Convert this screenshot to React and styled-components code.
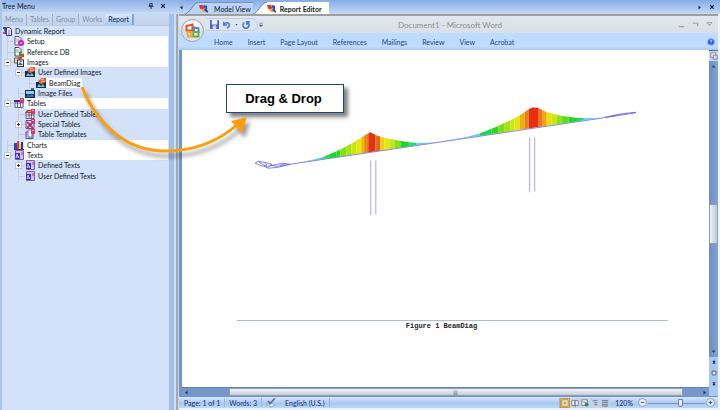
import React, { useState } from "react";
import styled, { createGlobalStyle, css } from "styled-components";

const GlobalStyle = createGlobalStyle`
	* {
		box-sizing: border-box;
	}
	body {
		margin: 0;
		background: #9fc0f0;
	}
	button {
		border: 0;
		padding: 0;
		margin: 0;
		background: transparent;
		font: inherit;
		color: inherit;
		cursor: pointer;
	}
	ul {
		margin: 0;
		padding: 0;
		list-style: none;
	}
	svg {
		display: block;
	}
`;

const uiFont = `Lato, "Open Sans", sans-serif`;

const Screen = styled.div`
	position: relative;
	display: flex;
	min-height: 100vh;
	overflow: hidden;
	font-family: "Liberation Sans", sans-serif;
	color: #10182a;
`;

/* ---------- tree menu ---------- */

const Sidebar = styled.aside`
	flex: none;
	width: 169px;
	display: flex;
	flex-direction: column;
	background: #d4e2f9;
	border-left: 2px solid #a9c5f0;
	font-family: ${uiFont};
	font-size: 7px;
`;

const PanelTitle = styled.header`
	height: 12px;
	display: flex;
	align-items: center;
	gap: 6px;
	padding: 0 3px 0 0;
	background: linear-gradient(#8fb2e8, #bdd3f5);
	line-height: 12px;
	& h1 {
		flex: 1;
		margin: 0;
		font: inherit;
	}
`;

const PanelTabs = styled.nav`
	height: 14px;
	display: flex;
	align-items: flex-end;
	background: linear-gradient(#cadcf6, #c3d2e8);
	border-bottom: 1px solid #b9cdec;
`;

const PanelTab = styled.button`
	height: 11px;
	padding: 0 3px;
	line-height: 11px;
	color: #8090a8;
	border-right: 1px solid #a3b2c9;
	${({ $active }) =>
		$active &&
		css`
			color: #10203f;
			background: linear-gradient(#dce9fc, #a9c8f5);
			border-right: 2px solid #7da5de;
		`}
	&:nth-last-child(2) {
		border-right: 0;
	}
`;

const Tree = styled.ul`
	height: 155px;
	display: grid;
	grid-auto-rows: 1fr;
`;

const TreeRow = styled.li`
	display: flex;
	align-items: center;
	min-height: 0;
	padding-left: ${({ $level }) => ($level ? $level * 11 - 9 : 0)}px;
`;

const ToggleSlot = styled.span`
	flex: none;
	width: 10px;
	height: 100%;
	display: flex;
	align-items: center;
	background: linear-gradient(#c3cddf, #c3cddf) 3px 0 / 1px 100% no-repeat,
		linear-gradient(#c3cddf, #c3cddf) 3px 5px / 7px 1px no-repeat;
`;

const Toggle = styled.button`
	width: 7px;
	height: 7px;
	background: #fdfdfd;
	border: 1px solid #c2c7ce;
	display: grid;
	place-items: center;
`;

const TreeLabel = styled.span`
	align-self: stretch;
	display: flex;
	align-items: center;
	padding: 0 2px 0 3px;
	line-height: 10px;
	white-space: nowrap;
	background: ${({ $tone }) => ($tone === "plain" ? "transparent" : "#fff")};
	flex: ${({ $tone }) => ($tone === "white" ? 1 : "none")};
	margin-right: 1px;
`;

const Splitter = styled.div`
	flex: none;
	width: 10px;
	display: flex;
	flex-direction: column;
	background: linear-gradient(
		90deg,
		#a1c0ef 0 5px,
		#cfdff5 5px 7px,
		#a8a9a4 7px 9px,
		#c3d5ee 9px
	);
`;

const SplitterCap = styled.div`
	height: 14px;
	background: linear-gradient(#8fb2e8, #c5d9f8);
`;

/* ---------- document side ---------- */

const Main = styled.main`
	flex: 1;
	min-width: 0;
	display: flex;
	flex-direction: column;
	padding-right: 2px;
	background: #eef3fa;
`;

const ViewTabs = styled.nav`
	height: 14px;
	display: flex;
	align-items: flex-end;
	margin-right: -2px;
	background: linear-gradient(#86abe6, #c5d9f8);
`;

const TabScroll = styled.button`
	align-self: center;
	width: 6px;
`;

const ViewTab = styled.button`
	display: flex;
	align-items: center;
	height: 12px;
	font-family: ${uiFont};
	font-size: 7px;
	line-height: 12px;
	font-weight: ${({ $active }) => ($active ? "bold" : "normal")};
`;

const ViewTabBody = styled.span`
	display: flex;
	align-items: center;
	gap: ${({ $active }) => ($active ? 4 : 6)}px;
	height: 12px;
	padding: 0 ${({ $active }) => ($active ? 7 : 2)}px 0 0;
	background: ${({ $active }) => ($active ? "#fff" : "#bcd3f6")};
	border-top: 1px solid ${({ $active }) => ($active ? "#fff" : "#6f92c8")};
`;

const TabBarActions = styled.div`
	margin-left: auto;
	align-self: center;
	display: flex;
	gap: 7px;
	padding-right: 5px;
`;

const WordWindow = styled.section`
	position: relative;
	flex: 1;
	display: flex;
	flex-direction: column;
	border-top: 2px solid #a09f99;
	border-bottom: 2px solid #e9f1fb;
	font-family: ${uiFont};
`;

const TitleBar = styled.div`
	height: 17px;
	display: flex;
	align-items: center;
	padding: 0 5px 0 27px;
	background: linear-gradient(#e0e7ee, #d7dfe8);
`;

const QuickAccess = styled.div`
	height: 13px;
	display: flex;
	align-items: center;
	gap: 4px;
	padding: 0 7px 0 4px;
	border: 1px solid #c3cedd;
	border-left: 0;
	border-radius: 0 7px 7px 0;
	background: #dce6f2;
`;

const DocTitle = styled.h2`
	flex: 1;
	margin: 0;
	padding-right: 42px;
	text-align: center;
	font-size: 8px;
	line-height: 14px;
	font-weight: normal;
	color: #8d9096;
`;

const WindowButtons = styled.div`
	display: flex;
	gap: 7px;
`;

const Ribbon = styled.nav`
	height: 17px;
	display: flex;
	align-items: center;
	gap: 15px;
	padding: 0 3px 0 35px;
	background: linear-gradient(#bfdbff 80%, #a9c8f0);
	font-size: 7px;
	line-height: 14px;
	color: #1f4288;
`;

const HelpButton = styled.button`
	margin-left: auto;
`;

const OfficeButton = styled.button`
	position: absolute;
	left: 2px;
	top: 3px;
	width: 23px;
	height: 23px;
	border-radius: 50%;
	border: 1px solid #9aa8bc;
	background: radial-gradient(circle at 50% 30%, #fff 20%, #d5dce6 60%, #eef2f8);
	display: grid;
	place-items: center;
`;

const Workspace = styled.div`
	flex: 1;
	display: flex;
	border-left: 3px solid #6d97cf;
`;

const PageColumn = styled.div`
	flex: 1;
	min-width: 0;
	display: flex;
	flex-direction: column;
`;

const Page = styled.article`
	flex: 1;
	background: #fff;
	padding: 0 41px 0 55px;
`;

const Figure = styled.figure`
	margin: 0;
	& > svg {
		width: 100%;
		height: auto;
	}
	& figcaption {
		border-top: 1px solid #aebdd4;
		text-align: center;
		font: bold 7px/11px "Liberation Mono", monospace;
		color: #222;
		padding-right: 22px;
	}
`;

const HScroll = styled.div`
	height: 9px;
	display: flex;
	align-items: stretch;
	border-top: 1px solid #5f83b8;
	background: #7598c8;
`;

const HTrack = styled.div`
	flex: ${({ $size }) => $size};
	display: flex;
	align-items: center;
	justify-content: ${({ $end }) => ($end ? "flex-end" : "flex-start")};
	padding: 0 2px;
`;

const HThumb = styled.div`
	flex: 458;
	display: grid;
	place-items: center;
	background: linear-gradient(#f4f6f9, #c5ccd6);
	border: 1px solid #8b9db8;
`;

const VScroll = styled.div`
	flex: none;
	width: 9px;
	display: flex;
	flex-direction: column;
	align-items: stretch;
	background: #a9c8f3;
`;

const RulerToggle = styled.button`
	height: 11px;
	display: grid;
	place-items: center;
	border-top: 1px solid #536a91;
	background: #c4d9f5;
`;

const VTrack = styled.div`
	flex: ${({ $size }) => $size};
	display: flex;
	flex-direction: column;
	justify-content: ${({ $end }) => ($end ? "flex-end" : "flex-start")};
	align-items: center;
	padding: 3px 0;
	background: linear-gradient(90deg, #6a8fc2, #83a4d2);
`;

const VThumb = styled.div`
	flex: 40;
	background: linear-gradient(90deg, #eef1f6, #bcc6d4);
	border: 1px solid #8b9db8;
`;

const Browse = styled.div`
	height: 39px;
	display: flex;
	flex-direction: column;
	align-items: center;
	justify-content: space-between;
	padding: 3px 0 10px;
`;

const StatusBar = styled.footer`
	height: 12px;
	display: flex;
	align-items: center;
	padding: 0 3px 0 1px;
	background: linear-gradient(#d5e5fb, #a9c8f1 60%, #c0d8f7);
	border-top: 1px solid #6f95cb;
	font-size: 7px;
	line-height: 10px;
	color: #142f68;
`;

const StatusItem = styled.button`
	display: flex;
	align-items: center;
	height: 9px;
	padding: 0 4px;
	border-right: 1px solid #98b6df;
	gap: 9px;
`;

const ViewButtons = styled.div`
	margin-left: auto;
	display: flex;
	height: 10px;
	border-left: 1px solid #98b6df;
`;

const ViewButton = styled.button`
	width: 10px;
	display: grid;
	place-items: center;
	border: 1px solid ${({ $active }) => ($active ? "#c99a3c" : "transparent")};
	background: ${({ $active }) => ($active ? "#ffd98a" : "#c3d4ea")};
`;

const ZoomLevel = styled.button`
	padding: 0 5px;
`;

const ZoomSlider = styled.input`
	appearance: none;
	width: 57px;
	height: 8px;
	margin: 0 1px;
	background: linear-gradient(#7b97c0, #7b97c0) 0 4px / 100% 1px no-repeat;
	&::-webkit-slider-thumb {
		appearance: none;
		width: 5px;
		height: 8px;
		background: #e6edf6;
		border: 1px solid #6c83a8;
		border-radius: 0 0 2px 2px;
	}
`;

/* ---------- annotation ---------- */

const Callout = styled.div`
	position: absolute;
	left: 226px;
	top: 84px;
	width: 118px;
	height: 29px;
	padding-right: 3px;
	border: 1px solid #1f4478;
	background: #fff;
	box-shadow: 4px 4px 4px rgba(0, 0, 0, 0.5);
	text-align: center;
	font-weight: bold;
	font-size: 13px;
	line-height: 27px;
	color: #000;
`;

const DragArrow = styled.svg`
	position: absolute;
	left: 70px;
	top: 80px;
	pointer-events: none;
	filter: drop-shadow(3px 5px 2px rgba(0, 0, 0, 0.4));
`;

/* ---------- icons ---------- */

const IconSvg = styled.svg`
	flex: none;
`;

const Icon = ({ size = 10, children }) => (
	<IconSvg width={size} height={size} viewBox="0 0 10 10">
		{children}
	</IconSvg>
);

const PinkTag = () => (
	<>
		<rect x="6" y="0" width="4" height="5" fill="#e0335f" />
		<rect x="7" y="1" width="2" height="1" fill="#f7b3c4" />
	</>
);

const icons = {
	report: (
		<>
			<path d="M4.500 1.500h3l2 2V9.500h-5z" fill="#e9ecff" stroke="#39349a" />
			<path d="M1 1h3v2H1zM2 3h3v5H3z" fill="#4a3c94" />
			<rect x="6" y="4" width="2" height="5" fill="#a9abe6" />
			<rect x="1" y="6" width="2" height="2" fill="#cf3d7b" />
		</>
	),
	setup: (
		<>
			<path d="M1 .5h4l2 2V9H1z" fill="#fff" stroke="#555470" />
			<path d="M2 3h3M2 5h3" stroke="#9a9aae" />
			<circle cx="7" cy="7" r="2" fill="#f6b8ea" stroke="#d417c0" strokeWidth="2" />
		</>
	),
	reference: (
		<>
			<path d="M1 .5h4l2 2V9H1z" fill="#fff" stroke="#3c4a4a" />
			<path d="M2 3h3M2 5h3" stroke="#79a48e" />
			<rect x="5" y="5" width="3" height="4" fill="#2d9a4a" />
			<rect x="7" y="6" width="3" height="4" fill="#e33f3a" />
			<rect x="7" y="6" width="3" height="1" fill="#f5c842" />
		</>
	),
	images: (
		<>
			<path d="M.5 1h5v5h-5z" fill="#f5d98f" stroke="#6b5a5c" />
			<rect x="3.500" y="3" width="6" height="6.500" fill="#f3f6ff" stroke="#2b2d55" />
			<path d="M4 8l2-3 3 3z" fill="#2467b8" />
			<rect x="4" y="0" width="4" height="2" fill="#d44b2b" />
			<rect x="6" y="4" width="2" height="1" fill="#e84949" />
		</>
	),
	userImage: (
		<>
			<rect x="0" y="4" width="10" height="6" fill="#152b48" />
			<path d="M1 9l2-3 2 2 2-2 2 3z" fill="#6fc1e6" />
			<path d="M2 3l4-3h4v4L6 6H4z" fill="#dc5a30" />
			<path d="M5 2l3-1M5 4l4-1" stroke="#f8c887" />
		</>
	),
	imageFile: (
		<>
			<rect x="0" y="2" width="10" height="8" fill="#152b48" />
			<rect x="1" y="3" width="8" height="3" fill="#8fd0ef" />
			<path d="M1 9l2-3 2 2 2-3 2 4z" fill="#2f73a9" />
			<rect x="6" y="0" width="3" height="2" fill="#4c6486" />
		</>
	),
	tables: (
		<>
			<path d="M1 2.500h8v7H1zM1 5h8M3.500 2v7M6.500 2v7" fill="#eceafa" stroke="#5f5680" strokeWidth=".9" />
			<rect x="0" y="2" width="7" height="2" fill="#3d355f" />
			<PinkTag />
		</>
	),
	userTable: (
		<>
			<path d="M1 3.500h8v6H1zM1 6h8M4 3v6M6.500 3v6" fill="#eceafa" stroke="#5b5076" strokeWidth=".9" />
			<path d="M0 4l2-3h6l1 3z" fill="#a93b31" />
			<rect x="3" y="2" width="4" height="1" fill="#f0a05b" />
			<PinkTag />
		</>
	),
	specialTable: (
		<>
			<path d="M1 1.500h8v8H1z" fill="#dcdcff" stroke="#5a51a2" />
			<path d="M2 3l6 6M8 3L2 9" stroke="#d33352" strokeWidth="2" />
			<path d="M4 5h2v2H4z" fill="#3f4bc4" />
			<PinkTag />
		</>
	),
	template: (
		<>
			<path d="M1 3h7v6.500H1z" fill="#d5d8ff" stroke="#4c4b9d" />
			<path d="M3 1h4v7H3z" fill="#fff" stroke="#6a69b4" />
			<PinkTag />
		</>
	),
	charts: (
		<>
			<rect x="0" y="3" width="3" height="6" fill="#2447cc" />
			<rect x="3" y="1" width="2" height="8" fill="#e13a2c" />
			<rect x="5" y="4" width="2" height="5" fill="#f0cc3c" />
			<rect x="7" y="2" width="2" height="7" fill="#2438a8" />
			<path d="M0 9.500h10" stroke="#4a3b4c" />
		</>
	),
	texts: (
		<>
			<path d="M1.500 .5h8v9h-8z" fill="#d9bfea" stroke="#7e63a0" />
			<path d="M1 3h5v6H1z" fill="#3a2fb4" />
			<path d="M2 8l1-4 2 4M2 7h3" stroke="#dfe0ff" fill="none" strokeWidth=".8" />
			<rect x="7" y="2" width="2" height="3" fill="#c07abf" />
		</>
	),
	view: (
		<>
			<path d="M0 1h4l2 3-2 3-3-2z" fill="#e2352a" />
			<path d="M5 1l4 1v5L6 5z" fill="#2a52c0" />
			<path d="M2 5l3 1 3 3H4z" fill="#f0b02b" />
			<path d="M6 6l4 3" stroke="#2a3c86" strokeWidth="2" />
		</>
	),
	close: <path d="M2 2l6 6M8 2L2 8" stroke="#172544" strokeWidth="2" />,
	pin: <path d="M3 1h4v4H3zM1 5.500h8M5 6v4" stroke="#172544" strokeWidth="1.500" fill="none" />,
	save: (
		<>
			<path d="M0 0h9l1 1v9H0z" fill="#5a5fc4" />
			<rect x="2" y="0" width="6" height="5" fill="#eef0ff" />
			<rect x="3" y="6" width="4" height="4" fill="#cfd6f2" />
		</>
	),
	undo: <path d="M1 1v4h4M1.500 4.500C4 1 8 2 8 5c0 2-1 3-3 4" stroke="#4f78d2" strokeWidth="2" fill="none" />,
	redo: <path d="M3 2C0 4 1 9 5 9s5-5 2-7M6 5V1h4" stroke="#4f78d2" strokeWidth="2" fill="none" />,
	office: (
		<>
			<path d="M1 2l4-1v4H1z" fill="none" stroke="#e2552d" strokeWidth="1.400" />
			<path d="M6 3l3 .5V6H6z" fill="none" stroke="#3f7fd0" strokeWidth="1.200" />
			<path d="M1.500 6H4v3H2z" fill="none" stroke="#f0a92a" strokeWidth="1.200" />
			<path d="M5.500 6H9v3H5.500z" fill="none" stroke="#6fae3a" strokeWidth="1.300" />
		</>
	),
	help: (
		<>
			<circle cx="5" cy="5" r="5" fill="#8db4ef" />
			<circle cx="5" cy="5" r="3.500" fill="#2358d2" />
			<path d="M4 4c0-2 3-1 2 0L5 5.500M5 7v1" stroke="#fff" fill="none" />
		</>
	),
	ruler: (
		<>
			<path d="M1 1h6v6H1z" fill="#f3ecec" stroke="#8c6f80" />
			<path d="M4 4h5v5H4z" fill="#d6dff0" stroke="#776c94" />
		</>
	),
	proof: (
		<>
			<path d="M0 6l4-2 5 3-4 2z" fill="#f5f8ff" stroke="#7087b4" strokeWidth=".7" />
			<path d="M2 3l2 3 5-6" stroke="#4c68ab" strokeWidth="1.400" fill="none" />
		</>
	),
	left: <path d="M7 1v8L2 5z" fill="#223355" />,
	right: <path d="M3 1v8l5-4z" fill="#223355" />,
	up: <path d="M1 7h8L5 2z" fill="#2c4674" />,
	down: <path d="M1 3h8L5 8z" fill="#2c4674" />,
	more: <path d="M2 2h6M2 5h6L5 8z" stroke="#56698c" fill="#56698c" />,
	minimize: <path d="M1 8h8" stroke="#a3a8ae" strokeWidth="2" />,
	restore: <path d="M1 3h8M8 3v4" stroke="#a3a8ae" strokeWidth="2" fill="none" />,
	dimClose: <path d="M1 2h8M2 3l3 3 3-3M5 5v2" stroke="#a3a8ae" strokeWidth="1.500" fill="none" />,
	prev: <path d="M2 5l3-4 3 4zM2 9l3-4 3 4z" fill="#111c33" stroke="#111c33" />,
	next: <path d="M2 1h6L5 5zM2 5h6L5 9z" fill="#111c33" stroke="#111c33" />,
	ball: <circle cx="5" cy="5" r="3.500" fill="#e4e6e0" stroke="#6c7688" strokeWidth="2" />,
	minus: (
		<>
			<circle cx="5" cy="5" r="4.400" fill="#e9eff8" stroke="#6f86ac" strokeWidth=".8" />
			<path d="M3 5h4" stroke="#36527f" />
		</>
	),
	plus: (
		<>
			<circle cx="5" cy="5" r="4.400" fill="#e9eff8" stroke="#6f86ac" strokeWidth=".8" />
			<path d="M3 5h4M5 3v4" stroke="#36527f" />
		</>
	),
	print: <path d="M1 1h8v8H1zM3 4h4M3 6h4" stroke="#8b7442" fill="#fff3d0" />,
	reading: <path d="M1 2h4v6H1zM5 2h4v6H5zM5 8v2" stroke="#6b7482" fill="#f2f4f7" />,
	web: (
		<>
			<path d="M1 1h7v7H1zM2 4h5" stroke="#6b7482" fill="#f2f4f7" />
			<circle cx="7" cy="7" r="2.500" fill="#2f8a78" />
		</>
	),
	outline: <path d="M2 2h6M4 4.500h4M4 7h4" stroke="#8490a4" strokeWidth="1.400" />,
	draft: <path d="M1 2h8M1 4.500h8M1 7h8M1 9h8" stroke="#7b8698" strokeWidth="1.400" />,
};

/* ---------- data ---------- */

const panelTabs = ["Menu", "Tables", "Group", "Works", "Report"];

const treeItems = [
	{ level: 0, label: "Dynamic Report", icon: "report", tone: "plain" },
	{ level: 1, label: "Setup", icon: "setup", tone: "white" },
	{ level: 1, label: "Reference DB", icon: "reference", tone: "white" },
	{ level: 1, label: "Images", icon: "images", tone: "white", toggle: "-" },
	{ level: 2, label: "User Defined Images", icon: "userImage", tone: "plain", toggle: "-" },
	{ level: 3, label: "BeamDiag", icon: "userImage", tone: "selected" },
	{ level: 2, label: "Image Files", icon: "imageFile", tone: "plain" },
	{ level: 1, label: "Tables", icon: "tables", tone: "white", toggle: "-" },
	{ level: 2, label: "User Defined Tables", icon: "userTable", tone: "plain" },
	{ level: 2, label: "Special Tables", icon: "specialTable", tone: "plain", toggle: "+" },
	{ level: 2, label: "Table Templates", icon: "template", tone: "plain" },
	{ level: 1, label: "Charts", icon: "charts", tone: "white" },
	{ level: 1, label: "Texts", icon: "texts", tone: "white", toggle: "-" },
	{ level: 2, label: "Defined Texts", icon: "texts", tone: "plain", toggle: "+" },
	{ level: 2, label: "User Defined Texts", icon: "texts", tone: "plain" },
];

const ribbonTabs = ["Home", "Insert", "Page Layout", "References", "Mailings", "Review", "View", "Acrobat"];

const viewModes = [
	["print", "Print Layout"],
	["reading", "Full Screen Reading"],
	["web", "Web Layout"],
	["outline", "Outline"],
	["draft", "Draft"],
];

// [start x, colour] of each contour band
const bands = [
	[300, "#5fd3ee"], [319, "#3fe0c8"], [324, "#17dc5c"], [329, "#12d81f"], [336, "#2bdc10"],
	[340, "#7be312"], [346, "#a3e411"], [351, "#cbe60f"], [356, "#e6ea0c"], [361, "#ecb40e"],
	[364, "#ee8a12"], [368, "#ea2f10"], [375, "#e66a1a"], [380, "#edd00f"], [384, "#e4e70c"],
	[389, "#c3e512"], [394, "#8be014"], [400, "#18d925"], [409, "#1adb73"], [416, "#45d9e4"],
	[430, "#7fbdf2"], [450, "#62c3f3"], [474, "#3fe0c8"], [479, "#15d94a"], [491, "#2cdb13"],
	[498, "#77e013"], [504, "#a6e411"], [510, "#d0e60f"], [514, "#e8e70c"], [519, "#edae10"],
	[524, "#ec7f13"], [528, "#e92d0e"], [538, "#ea7616"], [542, "#eda811"], [546, "#e8e00c"],
	[551, "#c9e610"], [556, "#8fe114"], [561, "#5fdd14"], [568, "#18d925"], [577, "#1adb73"],
	[583, "#45d9e4"], [600, "#6c7df0"],
];

const BeamDiagram = () => (
	<svg viewBox="237 50 430 269" role="img" aria-label="BeamDiag">
		<defs>
			<clipPath id="envelope">
				<path d="M300 162L312 159.500L322 157L340 149.500L355 141L363 136L370 132L377 135.500L386 138L405 141.500L418 143L435 142L450 139.500L465 137L480 133L497 126L510 120L520 114.500L528 109L532 107L537 107.500L545 111.500L560 115.500L575 117.500L585 118L600 117.500L315 160Z" />
			</clipPath>
		</defs>
		<g clipPath="url(#envelope)">
			{bands.map(([x, fill], i) => (
				<rect key={x} x={x} y="100" width={(bands[i + 1] ? bands[i + 1][0] : 640) - x} height="70" fill={fill} />
			))}
			<path d="M364.500 100v70M367.500 100v70M371.500 100v70M374.500 100v70M378.500 100v70" stroke="#b55a1a" opacity=".35" />
		</g>
		<path d="M290 164L600 118L635 112.500" stroke="#6f6bdc" fill="none" opacity=".8" />
		<path d="M604 117l12-2M610 115.500l16-2.500M618 114l17-2" stroke="#4140dc" fill="none" opacity=".7" />
		<path
			d="M255 163l3-2 6 1 3 3-4 1zM259 162l9 5 4-3-8-2M264 166l4 2 10-1 12-3-8-1-14 3M270 165l8 1 8-3M290 164l-10 2"
			stroke="#6664ee"
			strokeWidth=".8"
			fill="none"
		/>
		<path d="M370.500 160v55M375.500 160v54M529 137v55M534 137v54" stroke="#a9a4f2" fill="none" />
	</svg>
);

function TreePanel() {
	const [tab, setTab] = useState("Report");
	return (
		<Sidebar>
			<PanelTitle>
				<h1>Tree Menu</h1>
				<button aria-label="Pin">
					<Icon size={6}>{icons.pin}</Icon>
				</button>
				<button aria-label="Close panel">
					<Icon size={6}>{icons.close}</Icon>
				</button>
			</PanelTitle>
			<PanelTabs>
				{panelTabs.map(name => (
					<PanelTab key={name} $active={tab === name} onClick={() => setTab(name)}>
						{name}
					</PanelTab>
				))}
			</PanelTabs>
			<Tree>
				{treeItems.map(item => (
					<TreeRow key={item.label} $level={item.level}>
						{item.level > 0 && (
							<ToggleSlot>
								{item.toggle && (
									<Toggle aria-label={`Toggle ${item.label}`}>
										<svg width="5" height="5">
											<path
												d={item.toggle === "+" ? "M1 2.500h3M2.500 1v3" : "M1 2.500h3"}
												stroke="#333"
											/>
										</svg>
									</Toggle>
								)}
							</ToggleSlot>
						)}
						<Icon>{icons[item.icon]}</Icon>
						<TreeLabel $tone={item.tone}>{item.label}</TreeLabel>
					</TreeRow>
				))}
			</Tree>
		</Sidebar>
	);
}

const Slant = ({ active }) => (
	<IconSvg width="14" height="12">
		<path d="M0 12C5 11 8 1 14 0V12z" fill={active ? "#fff" : "#bcd3f6"} />
		<path d="M0 12C5 11 8 1 14 0" stroke="#5f84bd" fill="none" />
	</IconSvg>
);

const DocumentTab = ({ active, children }) => (
	<ViewTab $active={active}>
		<Slant active={active} />
		<ViewTabBody $active={active}>
			<Icon size={9}>{icons.view}</Icon>
			{children}
		</ViewTabBody>
	</ViewTab>
);

function Word() {
	const [zoom, setZoom] = useState(120);
	return (
		<WordWindow>
			<TitleBar>
				<QuickAccess>
					<button aria-label="Save">
						<Icon size={9}>{icons.save}</Icon>
					</button>
					<button aria-label="Undo">
						<Icon size={8}>{icons.undo}</Icon>
					</button>
					<Icon size={3}>{icons.down}</Icon>
					<button aria-label="Redo">
						<Icon size={8}>{icons.redo}</Icon>
					</button>
				</QuickAccess>
				<button aria-label="Customize toolbar">
					<Icon size={6}>{icons.more}</Icon>
				</button>
				<DocTitle>Document1 - Microsoft Word</DocTitle>
				<WindowButtons>
					<button aria-label="Minimize">
						<Icon size={7}>{icons.minimize}</Icon>
					</button>
					<button aria-label="Restore">
						<Icon size={7}>{icons.restore}</Icon>
					</button>
					<button aria-label="Close">
						<Icon size={7}>{icons.dimClose}</Icon>
					</button>
				</WindowButtons>
			</TitleBar>
			<Ribbon>
				{ribbonTabs.map(name => (
					<button key={name}>{name}</button>
				))}
				<HelpButton aria-label="Help">
					<Icon size={8}>{icons.help}</Icon>
				</HelpButton>
			</Ribbon>
			<OfficeButton aria-label="Office">
				<Icon size={15}>{icons.office}</Icon>
			</OfficeButton>
			<Workspace>
				<PageColumn>
					<Page>
						<Figure>
							<BeamDiagram />
							<figcaption>Figure 1 BeamDiag</figcaption>
						</Figure>
					</Page>
					<HScroll>
						<HTrack $size={43}>
							<button aria-label="Scroll left">
								<Icon size={5}>{icons.left}</Icon>
							</button>
						</HTrack>
						<HThumb>
							<Icon size={5}>{icons.draft}</Icon>
						</HThumb>
						<HTrack $size={22} $end>
							<button aria-label="Scroll right">
								<Icon size={5}>{icons.right}</Icon>
							</button>
						</HTrack>
					</HScroll>
				</PageColumn>
				<VScroll>
					<RulerToggle aria-label="View ruler">
						<Icon size={8}>{icons.ruler}</Icon>
					</RulerToggle>
					<VTrack $size={143}>
						<button aria-label="Scroll up">
							<Icon size={5}>{icons.up}</Icon>
						</button>
					</VTrack>
					<VThumb />
					<VTrack $size={112} $end>
						<button aria-label="Scroll down">
							<Icon size={5}>{icons.down}</Icon>
						</button>
					</VTrack>
					<Browse>
						<button aria-label="Previous page">
							<Icon size={4}>{icons.prev}</Icon>
						</button>
						<button aria-label="Select browse object">
							<Icon size={6}>{icons.ball}</Icon>
						</button>
						<button aria-label="Next page">
							<Icon size={4}>{icons.next}</Icon>
						</button>
					</Browse>
				</VScroll>
			</Workspace>
			<StatusBar>
				<StatusItem>Page: 1 of 1</StatusItem>
				<StatusItem>Words: 3</StatusItem>
				<StatusItem>
					<Icon>{icons.proof}</Icon>
					English (U.S.)
				</StatusItem>
				<ViewButtons>
					{viewModes.map(([icon, name], i) => (
						<ViewButton key={name} aria-label={name} $active={i === 0}>
							<Icon size={8}>{icons[icon]}</Icon>
						</ViewButton>
					))}
				</ViewButtons>
				<ZoomLevel>{zoom}%</ZoomLevel>
				<button aria-label="Zoom out">
					<Icon size={9}>{icons.minus}</Icon>
				</button>
				<ZoomSlider
					type="range"
					min="10"
					max="200"
					value={zoom}
					aria-label="Zoom"
					onChange={e => setZoom(e.target.value)}
				/>
				<button aria-label="Zoom in">
					<Icon size={9}>{icons.plus}</Icon>
				</button>
			</StatusBar>
		</WordWindow>
	);
}

function App() {
	return (
		<>
			<GlobalStyle />
			<Screen>
				<TreePanel />
				<Splitter>
					<SplitterCap />
				</Splitter>
				<Main>
					<ViewTabs>
						<TabScroll aria-label="Previous tab">
							<Icon size={5}>{icons.left}</Icon>
						</TabScroll>
						<DocumentTab>Model View</DocumentTab>
						<DocumentTab active>Report Editor</DocumentTab>
						<TabBarActions>
							<button aria-label="Next tab">
								<Icon size={5}>{icons.right}</Icon>
							</button>
							<button aria-label="Close view">
								<Icon size={6}>{icons.close}</Icon>
							</button>
						</TabBarActions>
					</ViewTabs>
					<Word />
				</Main>
				<Callout>Drag &amp; Drop</Callout>
				<DragArrow width="190" height="90" viewBox="70 80 190 90">
					<path d="M82 87C96 122 124 151 165 151C194 151 219 141 238 124" stroke="#ff9d0a" strokeWidth="3" fill="none" />
					<path d="M247 117L231 121L242 133Z" fill="#ff9d0a" />
				</DragArrow>
			</Screen>
		</>
	);
}

export default App;
